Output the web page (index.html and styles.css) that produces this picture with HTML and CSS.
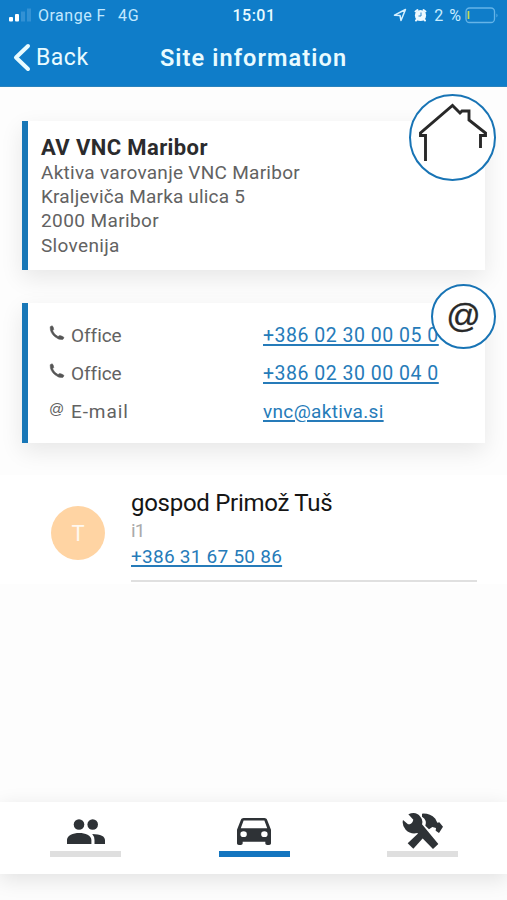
FILE: index.html
```html
<!DOCTYPE html>
<html lang="en">
<head>
<meta charset="utf-8">
<title>Site information</title>
<link rel="stylesheet" href="styles.css">
</head>
<body>
<header class="header">
  <div class="status">
    <div class="status-left">
      <svg class="signal" width="23" height="14" viewBox="0 0 23 14"><rect x="0" y="9" width="4" height="4.500" rx="1" fill="#fff"/><rect x="6" y="6" width="4" height="7.500" rx="1" fill="#fff"/><path d="M12 3.500h4v10h-4zM18 .5h4v13h-4z" fill="#4a9fdc" opacity=".6"/></svg>
      <span class="carrier">Orange F</span><span class="network">4G</span>
    </div>
    <span class="clock">15:01</span>
    <div class="status-right">
      <svg width="14" height="14" viewBox="0 0 14 14"><path d="M1.500 7.200 12.500 1.500 8 12.500 7 7.500z" fill="none" stroke="#d5f0ff" stroke-width="1.500" stroke-linejoin="round"/></svg>
      <svg class="alarm" width="13" height="14" viewBox="0 0 13 14"><circle cx="6.500" cy="7.500" r="5.600" fill="#edf9ff"/><path d="M1.500 3.500 3.500 2M11.500 3.500 9.500 2M2 12.500l1.500-1.500M11 12.500l-1.500-1.500" stroke="#edf9ff" stroke-width="2" stroke-linecap="round"/><path d="M7 4.500v3.500H4.500" fill="none" stroke="#2784c9"/></svg>
      <span class="charge">2 %</span>
      <svg class="battery" width="34" height="17" viewBox="0 0 34 17"><rect x="1" y="1" width="28.500" height="14.500" rx="3.500" fill="none" stroke="#65b4e8" stroke-width="1.300"/><path d="M3.500 4v8" stroke="#c8dc54" stroke-width="1.700"/><path d="M31.500 6.500q2 1.700 0 4z" fill="#65b4e8"/></svg>
    </div>
  </div>
  <nav class="navbar">
    <a class="back"><svg width="18" height="29" viewBox="0 0 18 29"><path d="M15 3 3 14.500 15 26" fill="none" stroke="#e8fbff" stroke-width="4" stroke-linecap="round" stroke-linejoin="round"/></svg><span>Back</span></a>
    <h1 class="title">Site information</h1>
  </nav>
</header>
<main class="content">
  <section class="card address">
    <h2 class="site-name">AV VNC Maribor</h2>
    <p class="line-a">Aktiva varovanje VNC Maribor</p>
    <p class="line-b">Kraljeviča Marka ulica 5</p>
    <p class="line-c">2000 Maribor</p>
    <p class="line-d">Slovenija</p>
    <div class="badge home"><svg width="86" height="86" viewBox="0 0 86 86"><path d="M16.500 67V41.500H11.500V39L43.500 11.500 51 19l2-2h7v9L76.500 39v2.500H71.500V54" fill="none" stroke="#292929" stroke-width="2.900"/></svg></div>
  </section>
  <section class="card contacts">
    <div class="row"><svg class="phone" width="16" height="16" viewBox="0 0 16 16"><path d="M1.200 1.800 3.200.8Q4.500 2 4.700 4.500L3.600 5.800Q5 9.500 9 11.600L10.800 10.600Q13.500 11 15 12.500L14 14.300Q10 15.400 6 11.800 1 8 1.200 1.800Z" fill="#555" stroke="#555" stroke-width=".6"/></svg><span class="kind">Office</span><a class="phone-link">+386 02 30 00 05 0</a></div>
    <div class="row"><svg class="phone" width="16" height="16" viewBox="0 0 16 16"><path d="M1.200 1.800 3.200.8Q4.500 2 4.700 4.500L3.600 5.800Q5 9.500 9 11.600L10.800 10.600Q13.500 11 15 12.500L14 14.300Q10 15.400 6 11.800 1 8 1.200 1.800Z" fill="#555" stroke="#555" stroke-width=".6"/></svg><span class="kind">Office</span><a class="phone-link">+386 02 30 00 04 0</a></div>
    <div class="row"><span class="at">@</span><span class="kind email">E-mail</span><a class="mail-link">vnc@aktiva.si</a></div>
    <div class="badge mail">@</div>
  </section>
  <section class="person">
    <div class="avatar">T</div>
    <div class="person-info">
      <h3>gospod Primož Tuš</h3>
      <p>i1</p>
      <a>+386 31 67 50 86</a>
    </div>
  </section>
</main>
<footer class="tabs">
  <div class="tab"><svg width="40" height="36" viewBox="0 0 40 36"><g fill="#2e3236"><circle cx="13" cy="12.500" r="5.300"/><circle cx="26.700" cy="12.500" r="5.300"/><path d="M1 32v-4C1 18.500 25.400 18.500 25.400 28v4zM26.200 22Q39 22 39 28.500V32H28.500v-4q0-3.500-2.300-6z"/></g></svg></div>
  <div class="tab active"><svg class="car" width="34" height="27" viewBox="3 5 18 16" preserveAspectRatio="none"><path fill="#2e3236" d="M18.920 6.010C18.720 5.420 18.160 5 17.500 5h-11c-.66 0-1.210.42-1.420 1.010L3 12v8c0 .55.45 1 1 1h1c.55 0 1-.45 1-1v-1h12v1c0 .55.45 1 1 1h1c.55 0 1-.45 1-1v-8zM6.500 16.300a1.700 1.700 0 1 1 0-3.400 1.700 1.700 0 0 1 0 3.400zm11 0a1.700 1.700 0 1 1 0-3.400 1.700 1.700 0 0 1 0 3.400zM5 11l1.500-4.500h11L19 11z"/></svg></div>
  <div class="tab"><svg width="42" height="38" viewBox="97 67 126 114"><g fill="#2e3236"><path d="M116 74Q139 64 152 81 161 91 157 104L206 163 190 178 143 130Q123 135 108 120 96 107 100 91L115 104Q128 104 131 90z"/><path d="M157 72Q180 70 197 87L203 99 209 98 220 111 208 130 198 123 199 115 188 112 178 119 167 108Q173 91 157 81z"/><path d="m150 127 15 13-34 37-17-16z"/></g></svg></div>
</footer>
</body>
</html>
```
FILE: styles.css
```css
* { box-sizing: border-box; }
body { margin: 0; height: 900px; display: flex; flex-direction: column; overflow: hidden; background: #fcfcfc; color: #626262; font-family: Roboto, "Liberation Sans", sans-serif; font-size: 19px; }
h1, h2, h3, p { margin: 0; }
svg { display: block; flex: none; }
.header { height: 87px; flex: none; background: #0f7dc9; color: #e8fbff; border-bottom: 1px solid #2a83bd; }
.status { height: 30px; display: grid; grid-template-columns: 1fr auto 1fr; align-items: center; padding: 0 8px 0 9px; font-size: 16px; }
.status-left, .status-right { display: flex; align-items: center; }
.status-left { color: #c1e8ff; }
.status-right { justify-content: flex-end; color: #c9edff; }
.carrier { margin-left: 6px; letter-spacing: .5px; }
.network { margin-left: 12px; letter-spacing: .8px; }
.clock { font-weight: 500; letter-spacing: .5px; }
.alarm { margin: 0 7px; }
.charge { letter-spacing: 1px; margin-right: 3px; }
.navbar { height: 54px; display: grid; grid-template-columns: 1fr auto 1fr; align-items: center; padding: 0 13px; }
.back { display: flex; align-items: center; gap: 5px; font-size: 23px; letter-spacing: .5px; }
.title { padding-top: 2px; font-size: 23.500px; line-height: 28px; font-weight: 600; letter-spacing: 1.100px; }
.content { flex: none; height: 715px; padding-top: 34px; background: #fdfdfd; }
.card { position: relative; width: 463px; margin-left: 22px; border-left: 6px solid #1877b7; background: #fff; box-shadow: 0 8px 22px rgba(0,0,0,.09); }
.address { height: 149px; padding: 14px 13px 0; line-height: 24.200px; }
.site-name { color: #2b2b2d; font-size: 22px; line-height: 26px; font-weight: 700; letter-spacing: .4px; }
.line-a { letter-spacing: .28px; }
.line-b { letter-spacing: .18px; }
.line-c { letter-spacing: .4px; }
.line-d { letter-spacing: .33px; }
.badge { position: absolute; border: 2.500px solid #1874b5; border-radius: 50%; background: #fff; color: #292929; }
.home { width: 87px; height: 87px; right: -11px; top: -27px; }
.home svg { margin: -2px; }
.contacts { height: 140px; margin-top: 33px; padding: 13px 21px; }
.row { height: 38px; display: grid; grid-template-columns: 22px 192px auto; align-items: center; }
.phone { margin-top: -5px; }
.kind { letter-spacing: -.05px; }
.email { letter-spacing: .9px; }
.phone-link { font-size: 19.500px; letter-spacing: .5px; }
.mail-link { letter-spacing: .33px; }
.at { font-family: "Liberation Sans", sans-serif; font-size: 15px; margin-top: -5px; }
a { color: #267bb9; text-decoration: underline; text-decoration-thickness: 1.500px; text-underline-offset: 2px; }
.header a { color: inherit; text-decoration: none; }
.mail { width: 65px; height: 65px; right: -11px; top: -19px; display: flex; align-items: center; justify-content: center; font-family: "Liberation Sans", sans-serif; font-size: 34px; line-height: 50px; -webkit-text-stroke: .3px #292929; padding-bottom: 3px; }
.person { height: 109px; margin-top: 32px; display: flex; background: #fff; padding-left: 51px; }
.avatar { width: 54px; height: 54px; margin-top: 31px; border-radius: 50%; background: #ffd4a3; color: #fff8ef; display: flex; align-items: center; justify-content: center; font-size: 22px; }
.person-info { width: 346px; height: 107px; margin-left: 26px; padding-top: 13px; border-bottom: 2px solid #e0e0e0; line-height: 27px; }
.person-info h3 { color: #151515; font-size: 24px; line-height: 30px; font-weight: 400; letter-spacing: -.28px; }
.person-info p { color: #aaa; line-height: 25px; letter-spacing: -.8px; }
.person-info a { letter-spacing: .25px; }
.tabs { position: relative; height: 72px; flex: none; display: flex; justify-content: space-between; padding: 10px 49px 0 50px; background: #fff; box-shadow: 0 5px 20px rgba(0,0,0,.11); }
.tab { width: 71px; height: 45px; display: flex; justify-content: center; border-bottom: 6px solid #dfdfdf; }
.tab.active { border-color: #1475bf; }
.car { margin-top: 6px; }
```
